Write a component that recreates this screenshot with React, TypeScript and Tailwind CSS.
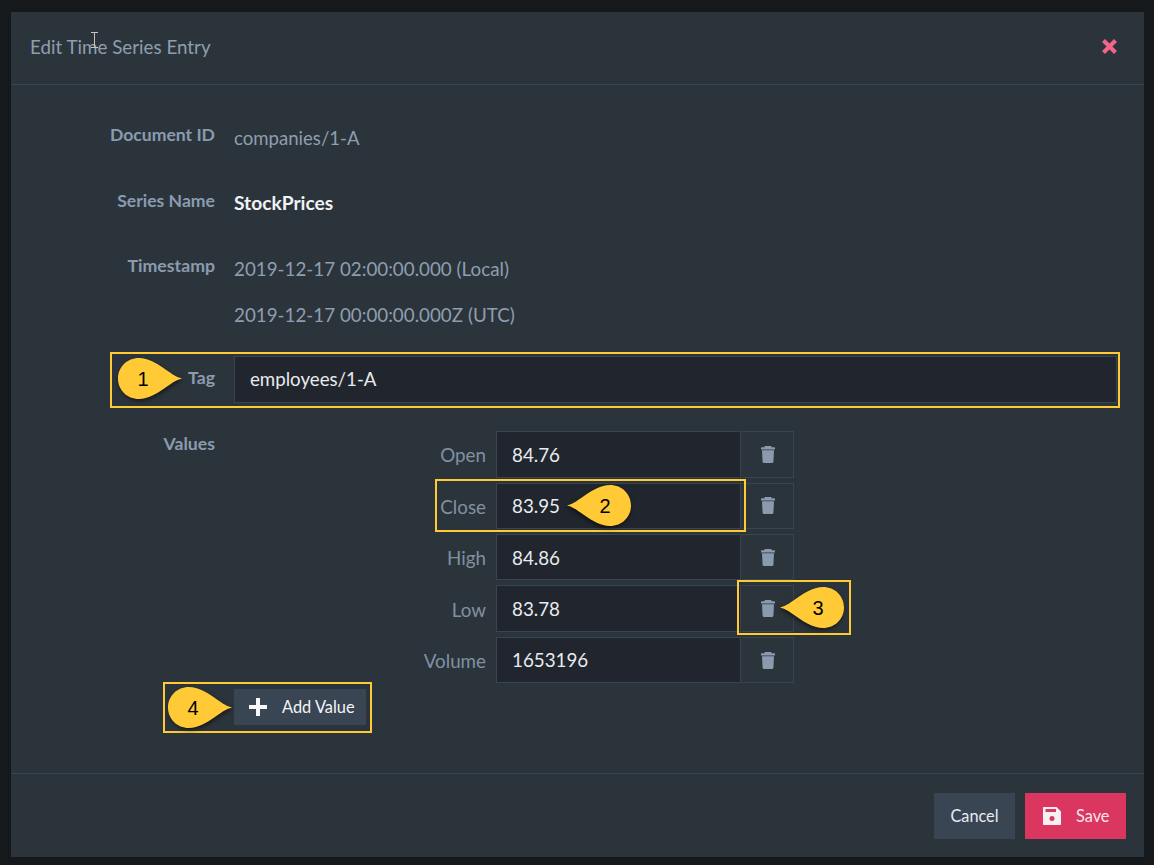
import React from "react";

const Trash = () => (
  <svg width="14" height="17" viewBox="0 0 14 17" className="block">
    <path d="M3.500 0.500C3.500 .2 3.800 0 4.100 0H9.900C10.200 0 10.500 .2 10.500 .5V1.300H13C13.600 1.300 14 1.700 14 2.300V3.500H0V2.300C0 1.700 .4 1.300 1 1.300H3.500Z" fill="#8a9bb0" />
    <path d="M1 4.200H13L12.400 15.800C12.400 16.500 11.900 17 11.200 17H2.800C2.100 17 1.600 16.500 1.600 15.800Z" fill="#8a9bb0" />
  </svg>
);

const Callout = ({ n, className, flip }: { n: string; className: string; flip?: boolean }) => (
  <div className={"absolute w-[64px] h-[41px] " + className}>
    <svg width="64" height="41" viewBox="0 0 64 41" className={"block overflow-visible drop-shadow-[1px_2px_2px_rgba(0,0,0,0.55)] " + (flip ? "-scale-x-100" : "")}>
      <path d="M64 20.500C52 18 40 1 21 0C9 0 0 9 0 20.500C0 32 9 41 21 41C40 40 52 23 64 20.500Z" fill="#ffca35" />
    </svg>
    <span className={"absolute top-0 h-[41px] w-[50px] flex items-center justify-center text-[20px] text-black font-['Liberation_Sans',sans-serif] " + (flip ? "right-[1px]" : "left-0")}>{n}</span>
  </div>
);

const fields = [
  ["Open", "84.76"],
  ["Close", "83.95"],
  ["High", "84.86"],
  ["Low", "83.78"],
  ["Volume", "1653196"],
];

export default function App() {
  return (
    <div className="relative h-[865px] w-[1154px] overflow-hidden bg-[#15191c] pt-[12px] pl-[11px] pr-[10px] pb-[8px] font-['Lato','Open_Sans',sans-serif]">
      <div className="flex h-full flex-col bg-[#2c343b]">
        <header className="flex h-[73px] shrink-0 items-center justify-between border-b border-[#38444f] pl-[19px] pr-[26px]">
          <h1 className="text-[18.800px] font-normal text-[#8e9eb0] -mt-[1px]">Edit Time Series Entry</h1>
          <svg width="17" height="17" viewBox="0 0 17 17" className="-mt-[4px]">
            <path d="M2.500 2.500L14.500 14.500M14.500 2.500L2.500 14.500" stroke="#f2648a" strokeWidth="4.200" />
          </svg>
        </header>

        <main className="flex-1 pt-[38px] grid grid-cols-[204px_1fr] gap-x-[19px] content-start pr-[27px]">
          <div className="h-[66px] text-right text-[17.600px] leading-[24px] font-bold text-[#8a9bb0]">Document ID</div>
          <div className="h-[66px] pt-[3px] text-[18.600px] leading-[24px] text-[#8e9eb0]">companies/1-A</div>

          <div className="h-[65px] text-right text-[17.600px] leading-[24px] font-bold text-[#8a9bb0]">Series Name</div>
          <div className="h-[65px] pt-[2px] text-[19.200px] leading-[24px] font-bold text-[#f0f2f5]">StockPrices</div>

          <div className="h-[102px] text-right text-[17.700px] leading-[24px] font-bold text-[#8a9bb0]">Timestamp</div>
          <div className="h-[102px] pt-[3px] text-[18.800px] leading-[24px] text-[#8e9eb0]">
            <div>2019-12-17 02:00:00.000 (Local)</div>
            <div className="mt-[22px]">2019-12-17 00:00:00.000Z (UTC)</div>
          </div>

          <div className="h-[75px] pt-[10px] text-right text-[17.700px] leading-[24px] font-bold text-[#8a9bb0]">Tag</div>
          <div className="h-[75px]">
            <div className="flex h-[47px] items-center border border-[#38444f] bg-[#21252d] pl-[15px] text-[18.700px] text-[#e8ebef]">employees/1-A</div>
          </div>

          <div className="pt-[1px] text-right text-[17.700px] leading-[24px] font-bold text-[#8a9bb0]">Values</div>
          <div className="flex flex-col gap-[5px] pt-[0.300px]">
            {fields.map(([label, value]) => (
              <div key={label} className="flex h-[46.400px]">
                <div className="flex w-[262px] items-center justify-end pr-[10px] pt-[2px] text-[18.800px] text-[#8090a2]">{label}</div>
                <div className="flex w-[245px] items-center border border-[#38444f] bg-[#21252d] pl-[15px] pt-[1px] text-[18.800px] text-[#e8ebef]">{value}</div>
                <div className="flex w-[52px] items-center justify-center border border-[#38444f] border-l-0 ml-[1px]"><Trash /></div>
              </div>
            ))}
            <button className="mt-[0.700px] flex h-[36px] w-[132px] items-center bg-[#3a4553] pl-[14px] text-[16.400px] text-[#f3f5f8]">
              <svg width="20" height="20" viewBox="0 0 20 20" className="mr-[14px]">
                <path d="M10 1V19M1 10H19" stroke="#f5f7fa" strokeWidth="4" />
              </svg>
              Add Value
            </button>
          </div>
        </main>

        <footer className="flex h-[84px] shrink-0 items-start justify-end gap-[10px] border-t border-[#38444f] pt-[19px] pr-[18px]">
          <button className="h-[46px] w-[81px] bg-[#3a4553] pt-[1px] text-[16.300px] text-[#e8ebef]">Cancel</button>
          <button className="flex h-[46px] w-[101px] items-center bg-[#da3660] pl-[18px] pt-[1px] text-[16.300px] text-[#f8e6eb]">
            <svg width="18" height="18" viewBox="0 0 18 18" className="mr-[15px] -mt-[2px]">
              <path d="M1 0H13.500L18 4.500V17C18 17.600 17.600 18 17 18H1C.4 18 0 17.600 0 17V1C0 .4 .4 0 1 0Z" fill="#f6f0f2" />
              <rect x="2.500" y="2" width="10.500" height="3" fill="#da3660" />
              <circle cx="9" cy="11.500" r="2.500" fill="#da3660" />
            </svg>
            Save
          </button>
        </footer>
      </div>

      <div className="absolute left-[110px] top-[352px] h-[56px] w-[1010px] border-2 border-[#ffca35]" />
      <div className="absolute left-[435px] top-[479px] h-[53px] w-[311px] border-2 border-[#ffca35]" />
      <div className="absolute left-[737px] top-[580px] h-[55px] w-[114px] border-2 border-[#ffca35]" />
      <div className="absolute left-[163px] top-[682px] h-[51px] w-[209px] border-2 border-[#ffca35]" />

      <Callout n="1" className="left-[118px] top-[358px]" />
      <Callout n="2" className="left-[567px] top-[485px]" flip />
      <Callout n="3" className="left-[780px] top-[587px]" flip />
      <Callout n="4" className="left-[168px] top-[687px]" />

      <svg width="7" height="16" viewBox="0 0 7 16" className="absolute left-[91px] top-[32px]">
        <path d="M0 .5H7M3.500 .5V15M0 15.500H7" stroke="#c9c4b8" strokeWidth="1" fill="none" />
      </svg>
    </div>
  );
}
